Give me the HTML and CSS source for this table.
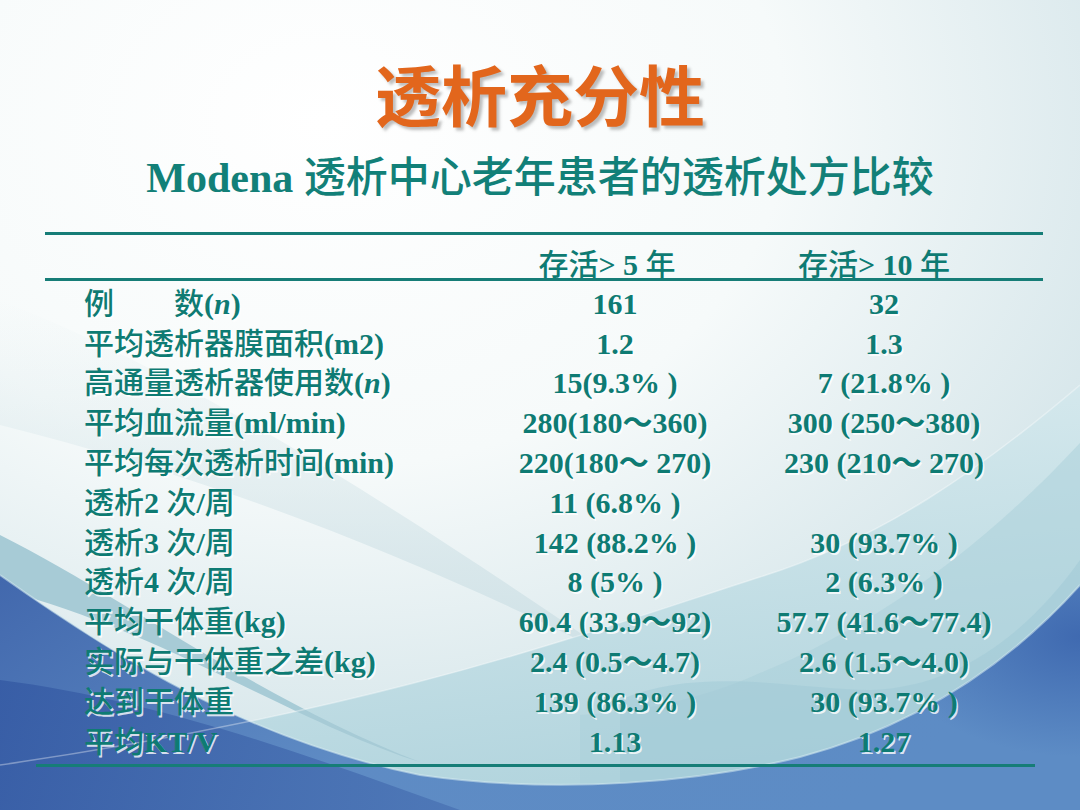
FILE: index.html
```html
<!DOCTYPE html>
<html lang="zh-CN">
<head>
<meta charset="utf-8">
<title>透析充分性</title>
<link rel="stylesheet" href="styles.css">
</head>
<body>
<div class="slide">
  <svg class="bg" viewBox="0 0 1080 810" preserveAspectRatio="none" aria-hidden="true">
    <defs>
      <radialGradient id="base" cx="0.3" cy="0.15" r="0.95">
        <stop offset="0" stop-color="#ffffff"/>
        <stop offset="0.45" stop-color="#f6fafa"/>
        <stop offset="1" stop-color="#c9dee4"/>
      </radialGradient>
      <linearGradient id="greyband" x1="0" y1="0" x2="0" y2="1">
        <stop offset="0" stop-color="#dbe9ec" stop-opacity="0"/>
        <stop offset="1" stop-color="#cfe1e6" stop-opacity="1"/>
      </linearGradient>
      <linearGradient id="cyan" x1="0" y1="0" x2="0.3" y2="1">
        <stop offset="0" stop-color="#e0eff2"/>
        <stop offset="1" stop-color="#b3d5de"/>
      </linearGradient>
      <linearGradient id="blue" x1="0" y1="0" x2="1" y2="0.3">
        <stop offset="0" stop-color="#4268ad"/>
        <stop offset="0.5" stop-color="#5e8bc4"/>
        <stop offset="1" stop-color="#5d8cc5"/>
      </linearGradient>
      <linearGradient id="deep" x1="0" y1="0" x2="1" y2="0">
        <stop offset="0" stop-color="#3459a3"/>
        <stop offset="1" stop-color="#4a73b4"/>
      </linearGradient>
      <radialGradient id="rightdark" cx="1" cy="0.3" r="0.7">
        <stop offset="0" stop-color="#3c66ae" stop-opacity="0.9"/>
        <stop offset="1" stop-color="#3c66ae" stop-opacity="0"/>
      </radialGradient>
    </defs>
    <rect width="1080" height="810" fill="url(#base)"/>
    <path d="M0,300 C200,380 400,510 620,660 C420,560 220,480 0,425 Z" fill="url(#greyband)"/>
    <path d="M1080,385 C980,470 880,540 760,577 C580,635 380,710 0,765 L0,810 L1080,810 Z" fill="url(#cyan)"/>
    <path d="M1080,443 C990,540 880,625 760,673 C700,700 640,712 580,715 L580,810 L1080,810 Z" fill="#a9cfd9" fill-opacity="0.5"/>
    <path d="M620,700 C700,665 800,690 870,690 C960,688 1030,630 1080,560 L1080,810 L620,810 Z" fill="#9ec7d4" fill-opacity="0.45"/>
    <path d="M0,535 C120,595 260,700 420,762 C300,725 150,625 0,590 Z" fill="#a7cbd6"/>
    <path d="M0,575 C120,660 250,740 420,775 C560,795 700,782 800,757 C930,722 1020,652 1080,585 L1080,810 L0,810 Z" fill="url(#blue)"/>
    <path d="M0,680 C160,700 320,760 460,810 L0,810 Z" fill="url(#deep)" fill-opacity="0.8"/>
    <path d="M1080,585 C1020,652 930,722 800,757 L1080,757 Z" fill="url(#rightdark)"/>
    <path d="M0,575 C120,660 250,740 420,775 C560,795 700,782 800,757 C930,722 1020,652 1080,585" fill="none" stroke="#d6ebf0" stroke-opacity="0.55" stroke-width="2"/>
    <path d="M1080,385 C980,470 880,540 760,577 C580,635 380,710 0,765" fill="none" stroke="#ffffff" stroke-opacity="0.35" stroke-width="1.5"/>
  </svg>

  <div class="content">
    <h1 class="title">透析充分性</h1>
    <h2 class="subtitle"><b>Modena</b> 透析中心老年患者的透析处方比较</h2>

    <div class="table">
      <div class="row head">
        <span></span>
        <span class="val h1">存活<b>&gt; 5 </b>年</span>
        <span class="val h2">存活<b>&gt; 10 </b>年</span>
      </div>
      <div class="body">
        <div class="row"><span class="lab">例　　数<b>(<i>n</i>)</b></span><span class="val num">161</span><span class="val num">32</span></div>
        <div class="row"><span class="lab">平均透析器膜面积<b>(m2)</b></span><span class="val num">1.2</span><span class="val num">1.3</span></div>
        <div class="row"><span class="lab">高通量透析器使用数<b>(<i>n</i>)</b></span><span class="val num">15(9.3% )</span><span class="val num">7 (21.8% )</span></div>
        <div class="row"><span class="lab">平均血流量<b>(ml/min)</b></span><span class="val num">280(180～360)</span><span class="val num">300 (250～380)</span></div>
        <div class="row"><span class="lab">平均每次透析时间<b>(min)</b></span><span class="val num">220(180～ 270)</span><span class="val num">230 (210～ 270)</span></div>
        <div class="row"><span class="lab">透析<b>2 </b>次<b>/</b>周</span><span class="val num">11 (6.8% )</span><span class="val num"></span></div>
        <div class="row"><span class="lab">透析<b>3 </b>次<b>/</b>周</span><span class="val num">142 (88.2% )</span><span class="val num">30 (93.7% )</span></div>
        <div class="row"><span class="lab">透析<b>4 </b>次<b>/</b>周</span><span class="val num">8 (5% )</span><span class="val num">2 (6.3% )</span></div>
        <div class="row"><span class="lab">平均干体重<b>(kg)</b></span><span class="val num">60.4 (33.9～92)</span><span class="val num">57.7 (41.6～77.4)</span></div>
        <div class="row"><span class="lab">实际与干体重之差<b>(kg)</b></span><span class="val num">2.4 (0.5～4.7)</span><span class="val num">2.6 (1.5～4.0)</span></div>
        <div class="row"><span class="lab">达到干体重</span><span class="val num">139 (86.3% )</span><span class="val num">30 (93.7% )</span></div>
        <div class="row"><span class="lab">平均<b>KT/V</b></span><span class="val num">1.13</span><span class="val num">1.27</span></div>
      </div>
    </div>
    <div class="rule-bottom"></div>
  </div>
</div>
</body>
</html>
```
FILE: styles.css
```css
html, body {
  margin: 0;
  padding: 0;
}

.slide {
  position: relative;
  width: 1080px;
  height: 810px;
  overflow: hidden;
  font-family: "Liberation Serif", "Noto Sans CJK SC", serif;
  color: #0e7b73;
  background: #ffffff;
}

.bg {
  position: absolute;
  left: 0;
  top: 0;
  width: 1080px;
  height: 810px;
  z-index: 0;
}

.content {
  position: relative;
  z-index: 1;
  padding-top: 53px;
}

.title {
  margin: 0;
  font-family: "Noto Sans CJK SC", sans-serif;
  font-size: 66px;
  line-height: 78px;
  font-weight: 700;
  text-align: center;
  color: #e2661c;
  text-shadow: 3px 3px 3px rgba(110, 110, 110, 0.45);
}

.subtitle {
  margin: 22px 0 0 0;
  font-family: "Liberation Serif", "Noto Sans CJK SC", serif;
  font-size: 42px;
  line-height: 50px;
  font-weight: 500;
  text-align: center;
  color: #128078;
}

.subtitle b {
  font-weight: 700;
}

.table {
  margin: 29px 37px 0 45px;
  border-top: 3px solid #167d77;
}

.row {
  display: grid;
  grid-template-columns: 398px 266px 272px;
  padding-left: 39px;
  height: 39.8px;
  align-items: center;
  font-size: 30px;
  line-height: 34px;
  text-shadow: 1.5px 1.5px 0 rgba(255, 255, 255, 0.8);
}

.row.head {
  height: 43px;
  align-items: end;
  line-height: 26px;
  border-bottom: 3px solid #167d77;
  font-weight: 500;
  text-shadow: none;
}

.head .h1 {
  padding-right: 16px;
}

.head .h2 {
  padding-right: 20px;
}

.body {
  padding-top: 3px;
}

.lab {
  font-weight: 500;
  white-space: pre;
}

.val {
  text-align: center;
  white-space: pre;
}

.num {
  font-weight: 700;
}

b {
  font-weight: 700;
}

.rule-bottom {
  margin: 2px 0 0 36px;
  width: 999px;
  height: 3px;
  background: #167d77;
}
```
